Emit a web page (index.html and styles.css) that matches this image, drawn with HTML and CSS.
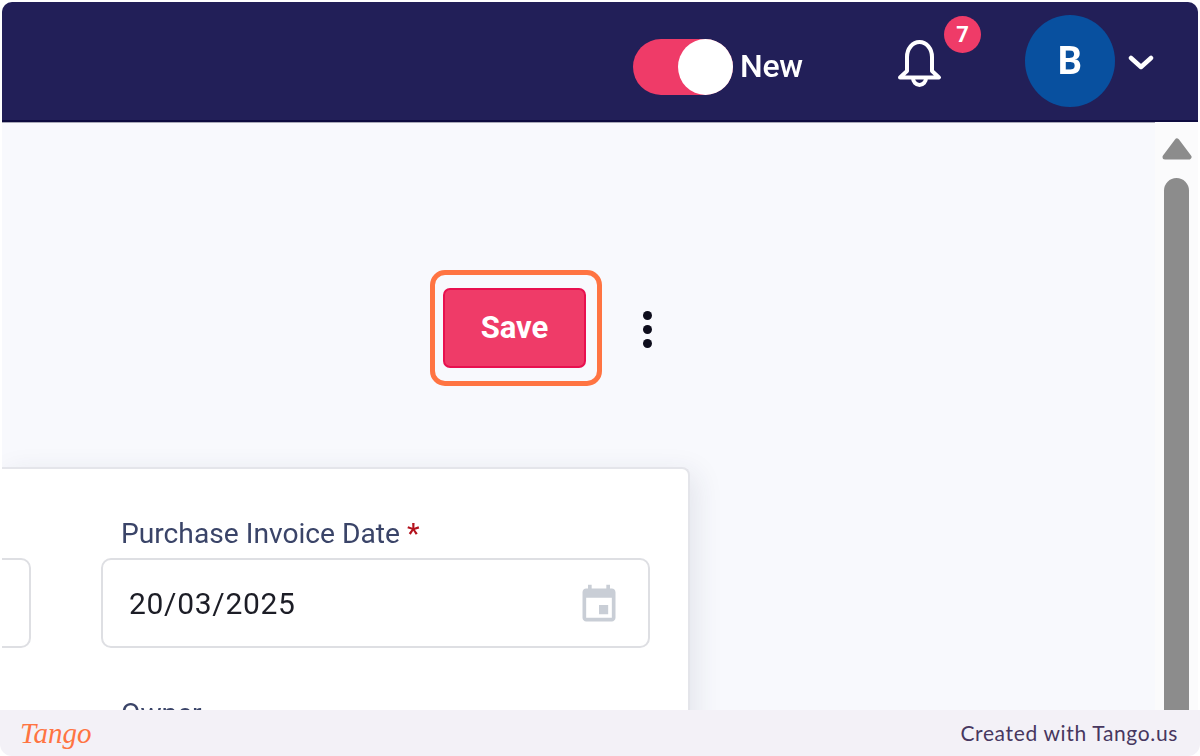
FILE: index.html
```html
<!DOCTYPE html>
<html lang="en">
<head>
    <meta charset="UTF-8">
    <title>Purchase Invoice</title>
    <link rel="stylesheet" href="styles.css">
</head>
<body>
    <div class="shot">
        <div class="app">
            <header class="topbar">
                <div class="toggle"><span class="toggle-knob"></span></div>
                <span class="toggle-label">New</span>
                <div class="bell">
                    <svg width="45" height="49" viewBox="0 0 45 49" fill="none" stroke="#fff" stroke-width="4" stroke-linecap="round" stroke-linejoin="round">
                        <path d="M10 33V19a12.500 15 0 0 1 25 0V33l7 6.500H3z"/>
                        <path d="M16 40a6.500 7 0 0 0 13 0"/>
                    </svg>
                    <span class="badge">7</span>
                </div>
                <div class="avatar">B</div>
                <svg class="chevron" width="26" height="16" viewBox="0 0 26 16" fill="none" stroke="#fff" stroke-width="4.500" stroke-linecap="round" stroke-linejoin="round">
                    <path d="M3 3l10 9 10-9"/>
                </svg>
            </header>
            <div class="body-row">
                <main class="content">
                    <div class="toolbar">
                        <button class="save">Save</button>
                        <div class="more"><span></span><span></span><span></span></div>
                    </div>
                    <section class="card">
                        <div class="field field-cut">
                            <label>&nbsp;</label>
                            <div class="input"></div>
                        </div>
                        <div class="field">
                            <label>Purchase Invoice Date <b>*</b></label>
                            <div class="input">
                                <span class="input-value">20/03/2025</span>
                                <svg class="input-icon" width="44" height="44" viewBox="0 0 24 24" fill="#c9ced6">
                                    <path d="M17 12h-5v5h5v-5zM16 1v2H8V1H6v2H5c-1.110 0-1.990.9-1.990 2L3 19c0 1.100.89 2 2 2h14c1.100 0 2-.9 2-2V5c0-1.100-.9-2-2-2h-1V1h-2zm3 18H5V8h14v11z"/>
                                </svg>
                            </div>
                        </div>
                        <div class="field field-cut"></div>
                        <div class="field">
                            <label>Owner</label>
                        </div>
                    </section>
                </main>
                <div class="scrollbar">
                    <svg class="scroll-up" width="30" height="22" viewBox="0 0 30 22" fill="#8c8c8c" stroke="#8c8c8c" stroke-width="5" stroke-linejoin="round">
                        <path d="M15 3L27 19H3z"/>
                    </svg>
                    <span class="scroll-thumb"></span>
                </div>
            </div>
        </div>
        <footer class="tango">
            <span class="tango-logo">Tango</span>
            <span class="tango-credit">Created with Tango.us</span>
        </footer>
    </div>
</body>
</html>
```

FILE: styles.css
```css
html, body {
    margin: 0;
    height: 756px;
    overflow: hidden;
    background: #fff;
}
.shot {
    height: 756px;
    display: flex;
    flex-direction: column;
    font-family: Roboto, Arial, sans-serif;
    overflow: hidden;
    border-radius: 0 0 12px 12px;
}
.app {
    flex: 1;
    min-height: 0;
    margin: 2px 2px 0;
    display: flex;
    flex-direction: column;
    border-radius: 10px 10px 0 0;
    overflow: hidden;
    background: #f8f9fd;
    filter: blur(0.5px);
}

/* top bar */
.topbar {
    height: 120px;
    flex: none;
    box-sizing: border-box;
    background: #221f58;
    border-bottom: 2px solid #0e0c40;
    box-shadow: 0 1px 0 #a9a9b8;
    display: flex;
    align-items: center;
    padding-right: 44px;
    justify-content: flex-end;
}
.toggle {
    width: 100px;
    height: 56px;
    margin-top: 12px;
    background: #ef3b68;
    border-radius: 28px;
    display: flex;
    justify-content: flex-end;
}
.toggle-knob {
    width: 55px;
    height: 56px;
    background: #fff;
    border-radius: 50%;
}
.toggle-label {
    margin: 10px 0 0 7px;
    width: 63px;
    color: #fff;
    font-size: 32px;
    font-weight: 500;
    letter-spacing: -0.3px;
}
.bell {
    position: relative;
    width: 45px;
    height: 49px;
    margin: 2px 0 0 94px;
}
.badge {
    position: absolute;
    left: 47px;
    top: -22px;
    width: 37px;
    height: 37px;
    border-radius: 50%;
    background: #ef3b68;
    color: #fff;
    font-size: 22px;
    font-weight: 700;
    display: flex;
    align-items: center;
    justify-content: center;
}
.avatar {
    width: 90px;
    height: 92px;
    margin-left: 83px;
    margin-top: -1px;
    border-radius: 50%;
    background: #08509f;
    color: #fff;
    font-size: 38px;
    font-weight: 700;
    display: flex;
    align-items: center;
    justify-content: center;
}
.chevron {
    margin-left: 13px;
    margin-top: 4px;
}

.body-row {
    flex: 1;
    min-height: 0;
    display: flex;
}
.content {
    flex: 1;
    min-width: 0;
    overflow: hidden;
}

/* actions */
.toolbar {
    display: flex;
    align-items: center;
    height: 80px;
    margin: 166px 0 0 441px;
}
.save {
    position: relative;
    width: 143px;
    height: 80px;
    background: #ef3b68;
    border: 2px solid #e8104f;
    border-radius: 7px;
    color: #fff;
    font-family: Roboto, Arial, sans-serif;
    font-size: 31px;
    font-weight: 700;
    padding: 0 0 2px;
}
/* the orange highlight box from the walkthrough */
.save::after {
    content: "";
    position: absolute;
    inset: -20px -18px -20px -15px;
    border: 5px solid #ff7442;
    border-radius: 15px;
}
.more {
    margin: 2px 0 0 57px;
    display: flex;
    flex-direction: column;
    gap: 5px;
}
.more span {
    width: 9px;
    height: 9px;
    border-radius: 50%;
    background: #0d0d1c;
}

/* form card */
.card {
    width: 688px;
    box-sizing: border-box;
    margin-top: 99px;
    padding: 48px 40px 0 0;
    background: #fff;
    border: 2px solid #e4e5ea;
    border-left: 0;
    border-bottom: 0;
    border-radius: 0 8px 0 0;
    box-shadow: 6px 6px 28px rgba(40, 45, 80, 0.1);
    display: grid;
    grid-template-columns: 29px 549px;
    column-gap: 70px;
    row-gap: 49px;
    height: 400px;
    align-content: start;
}
.field {
    min-width: 0;
}
.field-cut .input {
    margin-left: -30px;
}
.field label {
    display: block;
    margin: 0 0 8px 20px;
    height: 33px;
    color: #3a4468;
    font-size: 28.2px;
    line-height: 33px;
    white-space: nowrap;
}
.field label b {
    color: #b3121d;
    font-weight: 500;
}
.input {
    box-sizing: border-box;
    height: 90px;
    border: 2px solid #dedfe3;
    border-radius: 10px;
    display: flex;
    align-items: center;
    justify-content: space-between;
    padding: 0 27px 0 26px;
}
.input-value {
    color: #1c1d26;
    font-size: 30px;
    letter-spacing: 0.7px;
}
.input-icon {
    margin-top: 3px;
}

/* scrollbar */
.scrollbar {
    width: 43px;
    flex: none;
    background: #fbfbfc;
    display: flex;
    flex-direction: column;
    align-items: center;
}
.scroll-up {
    margin: 16px 0 18px;
    flex: none;
}
.scroll-thumb {
    flex: 1;
    width: 25px;
    background: #8c8c8c;
    border-radius: 13px 13px 0 0;
}

/* tango footer */
.tango {
    height: 46px;
    flex: none;
    background: #f3f1f7;
    display: flex;
    align-items: center;
    justify-content: space-between;
    padding: 0 22px 0 20px;
}
.tango-logo {
    color: #ff7442;
    font-family: "Liberation Serif", serif;
    font-style: italic;
    font-size: 29px;
}
.tango-credit {
    color: #47375f;
    font-family: Lato, sans-serif;
    font-size: 21px;
    letter-spacing: 0.65px;
    padding-bottom: 2px;
}
```
